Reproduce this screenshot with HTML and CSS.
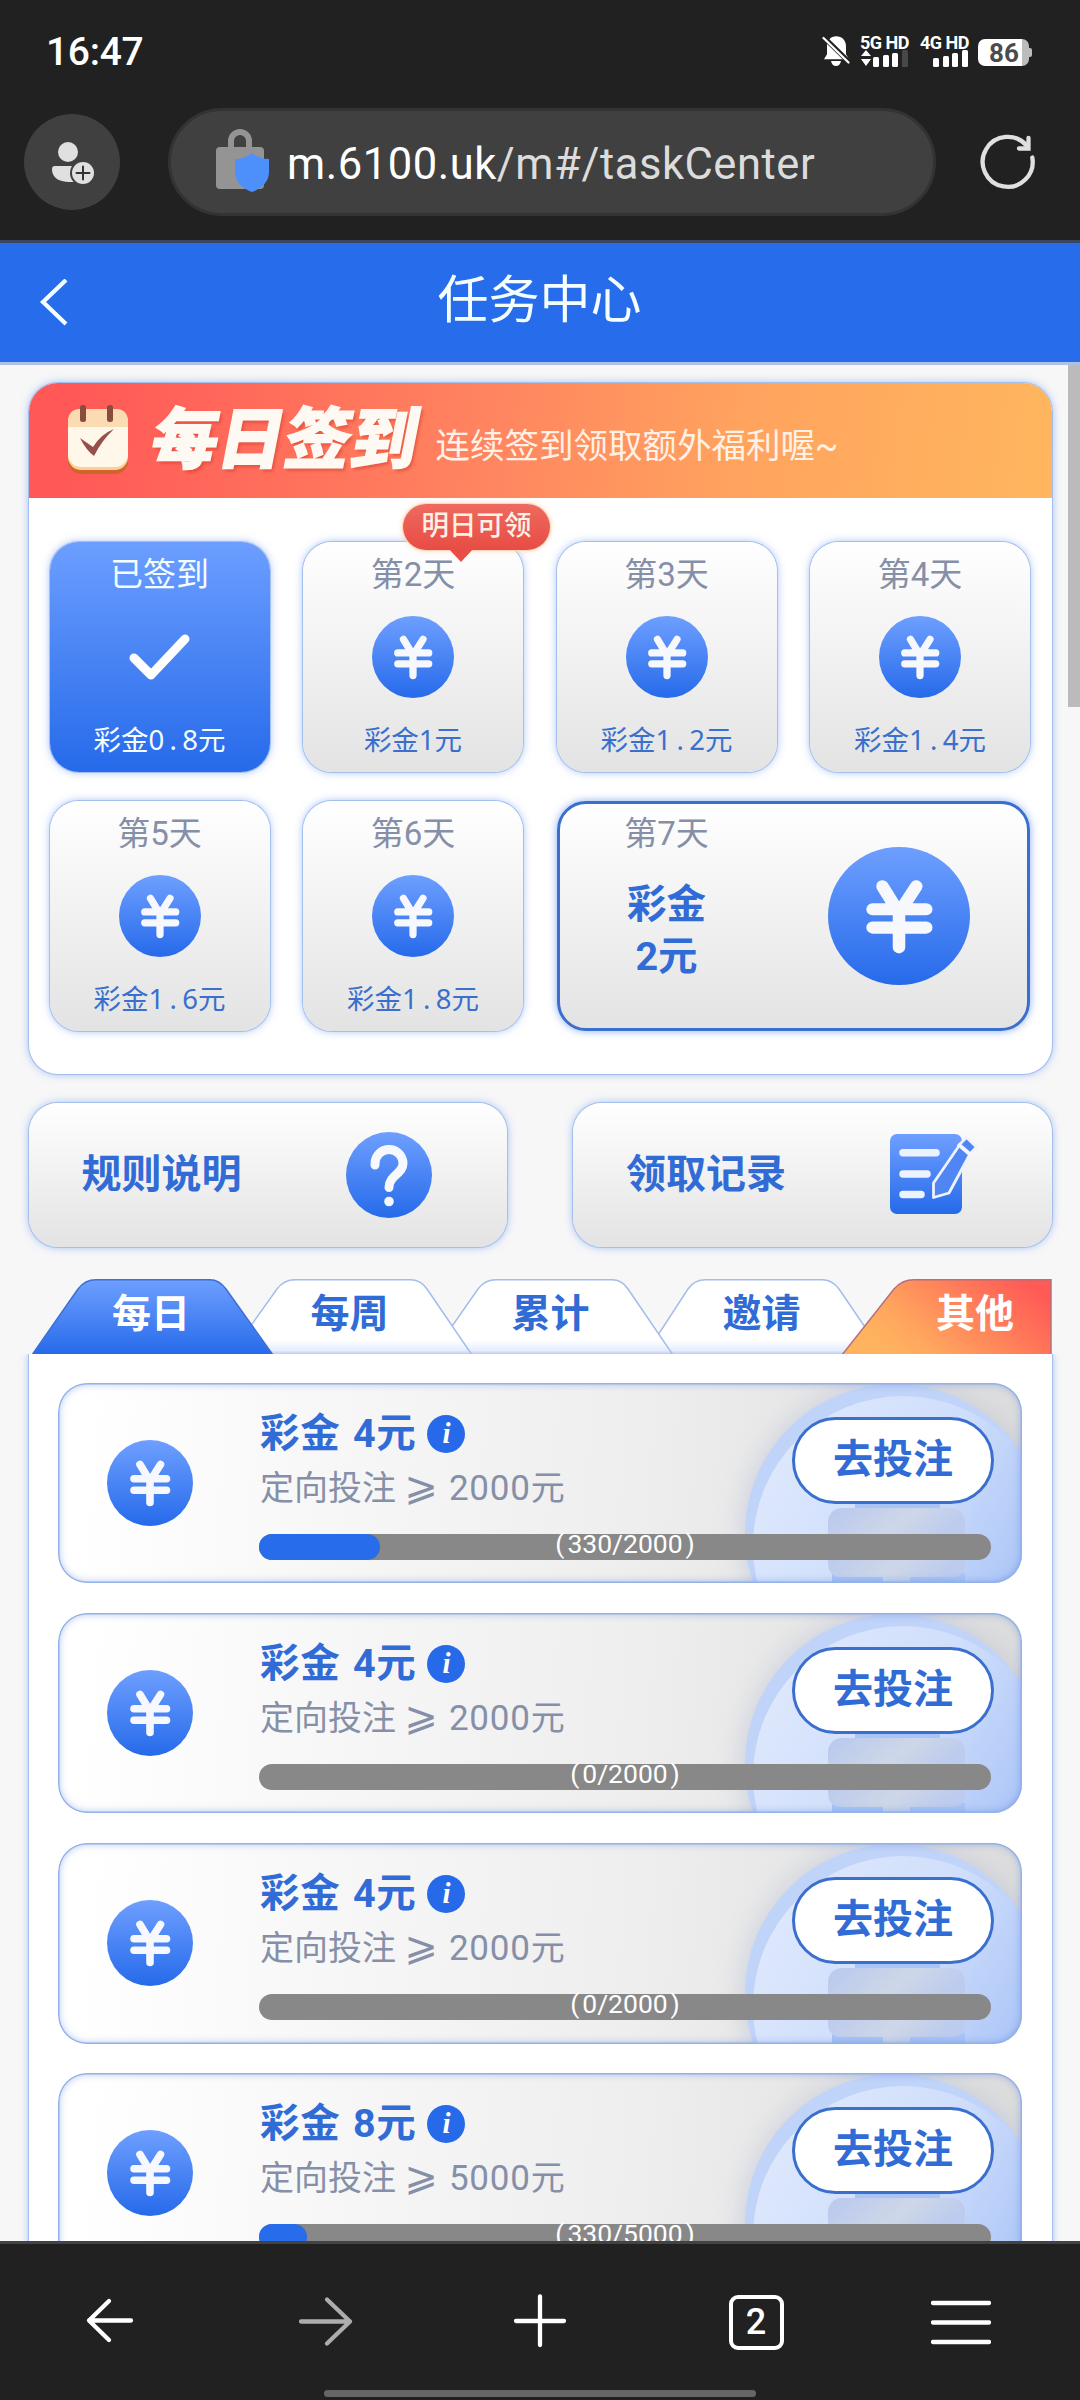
FILE: index.html
```html
<!DOCTYPE html>
<html lang="zh-CN">
<head>
<meta charset="utf-8">
<title>任务中心</title>
<link rel="stylesheet" href="styles.css">
</head>
<body>
<svg class="defs" width="0" height="0" aria-hidden="true">
  <defs>
    <linearGradient id="blue" x1="0" y1="0" x2="0" y2="1"><stop offset="0" stop-color="#6e9fff"/><stop offset="1" stop-color="#266aea"/></linearGradient>
    <linearGradient id="disc" x1="0" y1="0.2" x2="1" y2="0.8"><stop offset="0" stop-color="#dfe9fd"/><stop offset="0.45" stop-color="#cfdefb"/><stop offset="1" stop-color="#9fbcf6"/></linearGradient>
    <linearGradient id="slab" x1="0" y1="0" x2="1" y2="0.3"><stop offset="0" stop-color="#b8c8ee"/><stop offset="0.6" stop-color="#ced7e8"/><stop offset="1" stop-color="#bccbee"/></linearGradient>
    <linearGradient id="whitetab" x1="0" y1="0" x2="0" y2="1"><stop offset="0" stop-color="#fff"/><stop offset="0.8" stop-color="#fff"/><stop offset="0.94" stop-color="#e6edfc"/><stop offset="1" stop-color="#adc4f2"/></linearGradient>
    <linearGradient id="orange" x1="0" y1="0.7" x2="1" y2="0.3"><stop offset="0.1" stop-color="#ffb35e"/><stop offset="0.3" stop-color="#ffa65e"/><stop offset="1" stop-color="#ff5a56"/></linearGradient>
    <filter id="soft" x="-30%" y="-30%" width="160%" height="160%"><feGaussianBlur stdDeviation="14"/></filter>
    <symbol id="coin" viewBox="0 0 86 86" preserveAspectRatio="none">
      <circle cx="43" cy="43" r="43" fill="url(#blue)"/>
      <path d="M33 24.5 43 41 53.5 24.5M27 38.8H59.5M27 50.2H59.5M43 39V62.5" fill="none" stroke="#f6f8fd" stroke-width="7.6" stroke-linecap="round" stroke-linejoin="round"/>
    </symbol>
    <symbol id="watermark" viewBox="0 0 322 200">
      <circle cx="194" cy="152" r="150" fill="#8f9fc8" opacity=".35" filter="url(#soft)"/>
      <circle cx="195" cy="151" r="150" fill="#c0d3f8"/>
      <circle cx="203" cy="163" r="150" fill="url(#disc)"/>
      <path d="M155 120H240V130H155zM132 190H265V201H132z" fill="#a9c4f7"/>
      <rect x="128" y="125" width="137" height="36" rx="14" fill="url(#slab)"/>
      <path d="M128 160H265V180Q265 194 251 194H210V201H183V194H142Q128 194 128 180z" fill="url(#slab)"/>
    </symbol>
  </defs>
</svg>

<div class="status">
  <span class="time">16:47</span>
  <div class="status-icons">
    <svg class="bell" width="28" height="32" viewBox="0 0 28 32"><path d="M14 1.2c6 0 10 4 10 10v8l3 5H2l3-5v-8c0-6 4-10 9-10zM9 26h10q-1 5-5 5t-5-5z" fill="#fff"/><path d="M1 1.500 28 28" stroke="#212121" stroke-width="5"/><path d="M1.500 3 26.500 27.500" stroke="#fff" stroke-width="2.200" stroke-linecap="round"/></svg>
    <div class="net net-a"><b>5G HD</b>
      <svg width="49" height="17" viewBox="0 0 49 17"><path d="M6 0 11 6H1zM1 9H11L6 16z" fill="#fff"/><g fill="#fff"><rect x="13" y="7" width="6" height="10" rx="1.500"/><rect x="23" y="5" width="6" height="12" rx="1.500"/><rect x="32" y="3" width="6" height="14" rx="1.500"/></g><rect x="42" y="0" width="6" height="17" rx="1.500" fill="#484848"/></svg>
    </div>
    <div class="net net-b"><b>4G HD</b>
      <svg width="49" height="17" viewBox="0 0 49 17"><g fill="#fff"><rect x="13" y="8" width="6" height="9" rx="1.500"/><rect x="23" y="6" width="6" height="11" rx="1.500"/><rect x="32" y="3" width="6" height="14" rx="1.500"/><rect x="42" y="0" width="6" height="17" rx="1.500"/></g></svg>
    </div>
    <div class="battery">86</div>
  </div>
</div>

<div class="browser-bar">
  <div class="avatar">
    <svg width="96" height="96" viewBox="0 0 96 96"><circle cx="44" cy="38" r="10" fill="#e0e0e0"/><path d="M31 52H51V68H44Q28 67 28 55 28 52 31 52z" fill="#e0e0e0"/><circle cx="59" cy="59" r="13" fill="#404040"/><circle cx="59" cy="59" r="11" fill="#e0e0e0"/><path d="M52.500 59H65.500M59 52.500V65.500" stroke="#333" stroke-width="2" stroke-linecap="round"/></svg>
  </div>
  <div class="url">
    <svg width="56" height="68" viewBox="0 0 56 68"><path d="M15 20V13a9 9 0 0 1 18 0V20" fill="none" stroke="#949494" stroke-width="6"/><rect x="0" y="19" width="48" height="42" rx="4" fill="#949494"/><path d="M36 25Q43 31 53 31V45Q52 58 36 64 20 58 19 45V31Q29 31 36 25z" fill="#4d8ffb"/></svg>
    <span class="address"><span class="host">m.6100.uk</span>/m#/taskCenter</span>
  </div>
  <svg class="reload" width="56" height="56" viewBox="0 0 56 56" fill="none" stroke="#e0e0e0" stroke-width="4.300" stroke-linecap="round"><path d="M52.300 23.500A25 25 0 1 1 47 12"/><path d="M48.500 4V14.500H39"/></svg>
</div>

<header class="title-bar">
  <svg width="30" height="48" viewBox="0 0 30 48"><path d="M28 1 5 23 28 45" fill="none" stroke="#f4feff" stroke-width="4.200"/></svg>
  <h1>任务中心</h1>
</header>

<main class="page">
  <i class="scroll-thumb"></i>
  <section class="signin">
    <div class="banner">
      <svg width="62" height="70" viewBox="0 0 62 70"><rect x="1" y="12" width="60" height="57" rx="13" fill="#d0642c"/><rect x="1" y="8" width="60" height="57" rx="13" fill="#fbcf95"/><rect x="1" y="4" width="60" height="58" rx="13" fill="#fff7ea"/><path d="M1 22V17Q1 4 14 4H48Q61 4 61 17V22z" fill="#fbdcb2"/><rect x="13" y="0" width="6" height="17" rx="2.500" fill="#884e3d"/><rect x="40" y="0" width="6" height="17" rx="2.500" fill="#884e3d"/><path d="M13 33 26 42Q34 29 47 24 35 35 27 51 19 45 13 33z" fill="#96504c"/></svg>
      <h2>每日签到</h2>
      <p>连续签到领取额外福利喔~</p>
    </div>
    <div class="days">
      <div class="day done"><span class="name">已签到</span><svg class="ico" width="82" height="82" viewBox="0 0 82 82"><path d="M15 41 32 58 66 22" transform="translate(0 1)" fill="none" stroke="#fff" stroke-width="9" stroke-linecap="round" stroke-linejoin="round"/></svg><span class="gift">彩金0<i>.</i>8元</span></div>
      <div class="day"><span class="name">第2天</span><svg class="ico" width="82" height="82"><use href="#coin"/></svg><span class="gift">彩金1元</span>
        <span class="tip">明日可领<svg width="30" height="16" viewBox="0 0 30 16"><path d="M2 0 15 14 28 0" fill="#e84e45"/></svg></span></div>
      <div class="day"><span class="name">第3天</span><svg class="ico" width="82" height="82"><use href="#coin"/></svg><span class="gift">彩金1<i>.</i>2元</span></div>
      <div class="day"><span class="name">第4天</span><svg class="ico" width="82" height="82"><use href="#coin"/></svg><span class="gift">彩金1<i>.</i>4元</span></div>
      <div class="day"><span class="name">第5天</span><svg class="ico" width="82" height="82"><use href="#coin"/></svg><span class="gift">彩金1<i>.</i>6元</span></div>
      <div class="day"><span class="name">第6天</span><svg class="ico" width="82" height="82"><use href="#coin"/></svg><span class="gift">彩金1<i>.</i>8元</span></div>
      <div class="day final">
        <div class="final-text"><span class="name">第7天</span><strong>彩金<br>2元</strong></div>
        <svg width="142" height="138"><use href="#coin"/></svg>
      </div>
    </div>
  </section>

  <div class="actions">
    <div class="action"><span>规则说明</span>
      <svg class="ask" width="86" height="86" viewBox="0 0 86 86"><circle cx="43" cy="43" r="43" fill="url(#blue)"/><path d="M29 33V31.500A14 14 0 0 1 57 31.500C57 42 43 43 43 55.500" fill="none" stroke="#f6f8fd" stroke-width="9" stroke-linecap="round"/><circle cx="43" cy="69.500" r="4.800" fill="#f6f8fd"/></svg>
    </div>
    <div class="action"><span>领取记录</span>
      <svg class="log" width="88" height="82" viewBox="0 0 88 82"><rect width="72" height="80" rx="7" fill="url(#blue)"/><path d="M13 18.700H46M13 40H37M13 60.500H31" stroke="#edf3fe" stroke-width="7.500" stroke-linecap="round"/><path d="M71 9 76.500 3.500 86.500 13 80 20 59 59 43.500 63.500V49z" fill="#4f86f3" stroke="#eef2fb" stroke-width="2.800" stroke-linejoin="round"/><path d="M68 10 82 22" stroke="#f4f6fb" stroke-width="4"/></svg>
    </div>
  </div>

  <nav class="tabs">
    <svg class="tab-shapes" width="1024" height="76" viewBox="28 1279 1024 76" stroke-width="1.500">
      <g fill="url(#whitetab)" stroke="#a3bdec">
        <path d="M645 1355 688 1289Q694 1279.800 706 1279.800H822Q832 1279.800 839 1289L884 1355"/>
        <path d="M432 1355 478 1289Q485 1279.800 496 1279.800H612Q622 1279.800 628 1289L673 1355"/>
        <path d="M230 1355 277 1289Q284 1279.800 295 1279.800H410Q421 1279.800 427 1289L472 1355"/>
      </g>
      <path d="M32 1355 78 1289Q85 1279.800 96 1279.800H210Q219 1279.800 226 1289L273 1355z" fill="url(#blue)" stroke="#3c70d4"/>
      <path d="M842 1355 894 1289Q902 1279.800 914 1279.800H1051V1355z" fill="url(#orange)" stroke="#b5707d"/>
    </svg>
    <span class="on">每日</span><span>每周</span><span>累计</span><span>邀请</span><span class="on">其他</span>
  </nav>

  <section class="tasks">
    <article class="task">
      <svg class="mark" width="322" height="200"><use href="#watermark"/></svg>
      <svg class="task-coin" width="86" height="86"><use href="#coin"/></svg>
      <div class="task-main"><h3>彩金 4元<em>i</em></h3><p>定向投注 <i>⩾</i> <b>2000</b>元</p></div>
      <a class="go">去投注</a>
      <div class="bar"><div class="fill" style="width:16.5%"></div><span><i>(</i>330/2000<i>)</i></span></div>
    </article>
    <article class="task">
      <svg class="mark" width="322" height="200"><use href="#watermark"/></svg>
      <svg class="task-coin" width="86" height="86"><use href="#coin"/></svg>
      <div class="task-main"><h3>彩金 4元<em>i</em></h3><p>定向投注 <i>⩾</i> <b>2000</b>元</p></div>
      <a class="go">去投注</a>
      <div class="bar"><span><i>(</i>0/2000<i>)</i></span></div>
    </article>
    <article class="task">
      <svg class="mark" width="322" height="200"><use href="#watermark"/></svg>
      <svg class="task-coin" width="86" height="86"><use href="#coin"/></svg>
      <div class="task-main"><h3>彩金 4元<em>i</em></h3><p>定向投注 <i>⩾</i> <b>2000</b>元</p></div>
      <a class="go">去投注</a>
      <div class="bar"><span><i>(</i>0/2000<i>)</i></span></div>
    </article>
    <article class="task">
      <svg class="mark" width="322" height="200"><use href="#watermark"/></svg>
      <svg class="task-coin" width="86" height="86"><use href="#coin"/></svg>
      <div class="task-main"><h3>彩金 8元<em>i</em></h3><p>定向投注 <i>⩾</i> <b>5000</b>元</p></div>
      <a class="go">去投注</a>
      <div class="bar"><div class="fill" style="width:6.6%"></div><span><i>(</i>330/5000<i>)</i></span></div>
    </article>
  </section>
</main>

<footer class="toolbar">
  <div class="tools">
    <svg width="56" height="56" viewBox="0 0 56 56"><path d="M49 27.500H7M27 8 7 27.500 27 47" fill="none" stroke="#fff" stroke-width="4.300" stroke-linecap="round" stroke-linejoin="round"/></svg>
    <svg width="56" height="56" viewBox="0 0 56 56"><path d="M3 28.500H52M29 6.500 52 28.500 29 50.500" fill="none" stroke="#adadad" stroke-width="4.300" stroke-linecap="round" stroke-linejoin="round"/></svg>
    <svg width="56" height="56" viewBox="0 0 56 56"><path d="M3 28H51M27 3.500V52" stroke="#fff" stroke-width="4.300" stroke-linecap="round"/></svg>
    <span class="count">2</span>
    <svg class="menu" width="60" height="56" viewBox="0 0 60 56"><path d="M2 10H58M2 29.500H58M2 49H58" stroke="#fff" stroke-width="4.300" stroke-linecap="round"/></svg>
  </div>
  <div class="handle"></div>
</footer>
</body>
</html>
```
FILE: styles.css
```css
* { box-sizing: border-box; margin: 0; padding: 0; }
body {
  width: 1080px; height: 2400px; overflow: hidden;
  display: flex; flex-direction: column;
  background: #212121;
  font-family: Roboto, "Noto Sans CJK SC", sans-serif;
}
svg { display: block; flex: none; }
i { font-style: normal; }
.defs { position: absolute; }

/* Phone status row */
.status { height: 102px; padding: 0 48px 0 46px; display: flex; justify-content: space-between; color: #fff; }
.time { padding-top: 29px; font-size: 39px; line-height: 46px; font-weight: 500; letter-spacing: -0.3px; }
.status-icons { display: flex; padding-top: 35px; }
.bell { margin-right: 10px; }
.net { width: 49px; }
.net-b { margin: 0 9px 0 11px; }
.net b { display: block; height: 15px; font: 700 18px/15px Roboto, sans-serif; white-space: nowrap; letter-spacing: -.5px; }
.battery {
  width: 51px; height: 27px; margin-top: 4px; margin-right: 3px; border-radius: 7px; position: relative;
  background: linear-gradient(90deg, #fff 44px, #bcbcbc 44px);
  color: #4b4b4b; font: 700 26px/28px Roboto, sans-serif; padding-left: 11px;
}
.battery::after { content: ""; position: absolute; right: -3px; top: 9px; width: 3px; height: 9px; background: #bcbcbc; border-radius: 0 2px 2px 0; }

/* Address row */
.browser-bar { height: 138px; padding: 6px 44px 0 24px; display: flex; align-items: flex-start; }
.avatar { width: 96px; height: 96px; margin-top: 6px; border-radius: 50%; background: #404040; flex: none; }
.url { width: 768px; height: 108px; margin: 0 44px 0 48px; border: 3px solid #333; border-radius: 54px; background: #404040; display: flex; align-items: center; padding-left: 45px; flex: none; }
.address { margin-left: 15px; padding-top: 6px; font-size: 43.500px; letter-spacing: .55px; line-height: 60px; color: #dcdcdc; white-space: nowrap; }
.host { color: #fff; }
.reload { margin-top: 26px; }

.title-bar {
  height: 125px; border-top: 3px solid #3b4560; border-bottom: 3px solid #b0c0e4; background: #276cea;
  display: flex; align-items: center; padding-left: 38px; flex: none;
}
.title-bar h1 { flex: 1; text-align: center; margin-right: 69px; margin-top: -3px; font-size: 51px; font-weight: 400; color: #f4feff; line-height: 74px; }

.page { height: 1876px; overflow: hidden; position: relative; background: #f7f7f8; padding: 18px 28.500px 0; flex: none; }
.scroll-thumb { position: absolute; right: 0; top: 0; width: 12px; height: 342px; background: #bbb; }

/* Daily check-in */
.signin, .action, .day { box-shadow: 0 0 0 1px #a3bfee, 0 0 8px rgba(60, 120, 240, .5); border-radius: 29px; }
.signin { height: 691px; background: #fff; }
.banner {
  height: 115px; border-radius: 29px 29px 0 0; padding: 22px 0 0 38px; display: flex;
  background: linear-gradient(98deg, #ff5857 4%, #ff8660 46%, #ffa45e 70%, #ffb65e 100%);
}
.banner h2 {
  margin: -9px 0 0 15px; width: 278px; padding-left: 7px; font: 900 66.500px/76px "Noto Sans CJK SC", sans-serif; color: #fff9f3;
  transform: skewX(-11deg); -webkit-text-stroke: 1.500px #fff9f3; text-shadow: 3px 3px 3px rgba(200, 50, 30, .45); white-space: nowrap;
}
.banner p { margin-left: 14px; padding-top: 16px; font-size: 34.500px; line-height: 50px; color: #fff1e5; }
.days { display: grid; grid-template-columns: repeat(4, 220px); grid-auto-rows: 230.500px; gap: 28.500px 33.500px; padding: 43.500px 0 0 21px; }
.day { position: relative; background: linear-gradient(#fff, #e3e3e3); display: flex; flex-direction: column; align-items: center; }
.name { margin-top: 9px; font-size: 33px; line-height: 48px; color: #858fa8; white-space: nowrap; }
.ico { margin: 17px 0 22px; }
.gift { font: 400 27.500px/40px "Noto Sans", "Noto Sans CJK SC", sans-serif; color: #3a6fcd; white-space: nowrap; }
.gift i { display: inline-block; width: 18px; text-align: center; }
.day.done { background: linear-gradient(#6c9eff, #266aea); }
.done .name, .done .gift { color: #f4fdff; }
.tip {
  position: absolute; left: 100px; top: -38px; width: 147px; height: 46px; border-radius: 23px; z-index: 1;
  background: linear-gradient(#ee6a5f, #e74c44); box-shadow: 0 0 0 1px #fbd9bd, 0 0 6px #f8cfae;
  color: #fdf0e5; font-size: 27.500px; line-height: 44px; font-weight: 500; text-align: center; white-space: nowrap;
}
.tip svg { position: absolute; left: 43px; top: 44px; }
.final { grid-column: span 2; flex-direction: row; justify-content: space-between; align-items: center; padding: 0 57px 0 44px; border: 3px solid #3a6fcd; box-shadow: 0 0 8px rgba(60, 120, 240, .6); }
.final-text { align-self: flex-start; width: 126px; display: flex; flex-direction: column; align-items: center; }
.final .name { margin-top: 6px; }
.final strong { margin-top: 21px; font-size: 39.500px; line-height: 52px; color: #316cd6; text-align: center; }

/* Rules / history */
.actions { margin-top: 28.500px; display: flex; justify-content: space-between; }
.action { width: 478.500px; height: 144.500px; background: linear-gradient(#fff, #e3e3e3); display: flex; align-items: center; padding-left: 53px; }
.action span { width: 162px; font-size: 40px; line-height: 58px; font-weight: 700; color: #316cd6; white-space: nowrap; }
.ask { margin-left: 102px; }
.log { margin-left: 102px; }

/* Category tabs: label columns follow the uneven tab shapes */
.tabs { position: relative; height: 75px; margin-top: 32px; display: grid; grid-template-columns: 245px 152px 250px 172px 203px; }
.tab-shapes { position: absolute; left: -.5px; top: 0; }
.tabs span { position: relative; padding-top: 6px; text-align: center; font-size: 39px; line-height: 58px; font-weight: 700; color: #316cd6; }
.tabs .on { color: #fff; }
.tabs span:last-of-type { padding-left: 52px; }

/* Task list */
.tasks { background: #fff; box-shadow: 0 0 0 1px #a3bfee, 0 0 8px rgba(60, 120, 240, .5); clip-path: inset(0 -10px 0 -10px); padding: 28.500px 29.500px; height: 1000px; display: flex; flex-direction: column; gap: 29.600px; }
.task {
  position: relative; height: 200.700px; flex: none; overflow: hidden; border-radius: 29px;
  background: linear-gradient(95deg, #fff 3%, #f5f5f5 35%, #eeeeee 60%, #dcdcdc 100%);
  display: grid; grid-template-columns: 153px 532px 202px; grid-template-rows: 151px 26px; column-gap: 0; padding-left: 49px;
}
.task::after { content: ""; position: absolute; inset: 0; border-radius: 29px; box-shadow: inset 0 0 0 1.500px #93b2e8, inset 0 0 9px rgba(60, 110, 220, .5); }
.mark { position: absolute; right: 0; top: 0; }
.task-coin { margin-top: 57px; }
.task-main { padding-top: 23px; color: #858fa8; }
.task h3 { display: flex; align-items: center; font-size: 39.500px; line-height: 56px; letter-spacing: .7px; word-spacing: 2px; color: #316cd6; white-space: pre; }
.task em { width: 38px; height: 38px; margin-left: 11px; border-radius: 50%; background: #266aea; color: #fff; text-align: center; letter-spacing: 0; font: italic 700 29px/36px "Liberation Serif", serif; }
.task p { font-size: 34px; line-height: 50px; margin-top: 1px; white-space: pre; }
.task p i { display: inline-block; font-family: "DejaVu Sans", sans-serif; font-size: 40px; line-height: 1; width: 36px; }
.task p b { font-weight: 400; font-size: 35px; letter-spacing: .8px; }
.go { position: relative; z-index: 1; margin-top: 34px; width: 202px; height: 87px; border: 3px solid #3a6fcd; border-radius: 44px; background: #fff; color: #316cd6; font-size: 40px; font-weight: 700; line-height: 79px; text-align: center; }
.bar { grid-column: 2 / 4; width: 732px; margin-left: -1px; height: 26px; border-radius: 13px; background: #888; position: relative; text-align: center; color: #fff; font-size: 26.500px; line-height: 19px; }
.bar .fill { position: absolute; left: 0; top: 0; height: 26px; border-radius: 13px; background: #276cea; }
.bar span { position: relative; }
.bar i { display: inline-block; width: 15px; }

/* Browser toolbar */
.toolbar { height: 159px; flex: none; background: #212121; border-top: 3px solid #434343; }
.tools { height: 146px; padding: 49px 0 0 82px; display: flex; align-items: flex-start; gap: 159.500px; }
.count { width: 55px; height: 55px; border: 4px solid #fff; border-radius: 9px; color: #fff; font-size: 36px; line-height: 47px; font-weight: 500; text-align: center; margin: 2px 0 0; }
.menu { margin-left: -12px; }
.handle { width: 432px; height: 7px; margin: 0 auto; border-radius: 4px; background: #666; }
```
